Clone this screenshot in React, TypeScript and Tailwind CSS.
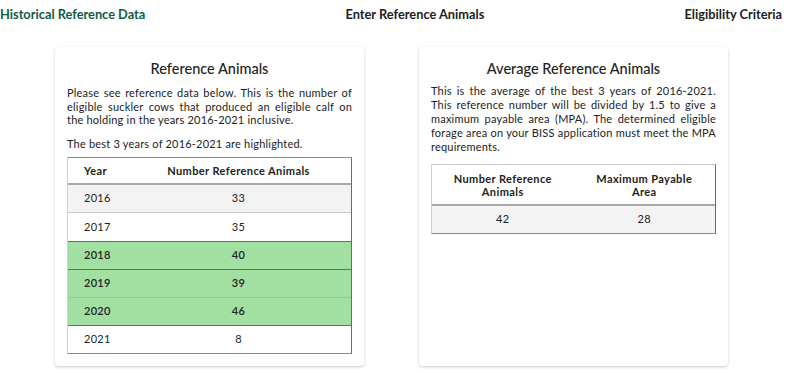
import React from "react";

const rows = [
  { year: "2016", n: "33", cls: "bg-[#f3f3f3] border-b border-[#c8c8c8]" },
  { year: "2017", n: "35", cls: "bg-white" },
  { year: "2018", n: "40", cls: "bg-[#a1e0a1] border-t border-[#6b6b6b] font-semibold" },
  { year: "2019", n: "39", cls: "bg-[#a1e0a1] border-t border-[#6b6b6b] font-semibold" },
  { year: "2020", n: "46", cls: "bg-[#a1e0a1] border-t border-[#8fcf8f] font-semibold" },
  { year: "2021", n: "8", cls: "bg-white border-t border-[#6b6b6b]" },
];

export default function App() {
  return (
    <div className="w-[800px] h-[373px] bg-white text-[#222] overflow-hidden" style={{ fontFamily: "Lato, 'Open Sans', sans-serif" }}>
      <nav className="flex justify-between w-[782px] pt-[5px] h-[47px] text-[12.8px] font-bold">
        <span className="text-[#0d5c46]">Historical Reference Data</span>
        <span>Enter Reference Animals</span>
        <span>Eligibility Criteria</span>
      </nav>
      <div className="flex gap-[55px] pl-[55px]">
        <div className="w-[309px] h-[319px] rounded-[4px] bg-white shadow-[0_1px_3px_rgba(0,0,0,0.22)] px-[12px] pt-[13px]">
          <h2 className="text-center text-[14.5px] font-medium leading-[18px] mb-[8px]">Reference Animals</h2>
          <p className="text-[11px] leading-[13.5px] text-justify tracking-[0.2px]">
            Please see reference data below. This is the number of eligible suckler cows that produced an eligible calf on the holding in the years 2016-2021 inclusive.
          </p>
          <p className="text-[11px] leading-[13.5px] tracking-[0.2px] mt-[10px] mb-[7px]">The best 3 years of 2016-2021 are highlighted.</p>
          <div className="w-[285px] border-l border-l-[#d0d0d0] border-r border-r-[#6b6b6b] border-t border-t-[#8a8a8a] border-b border-b-[#8a8a8a] text-[11px]">
            <div className="flex h-[27px] items-center border-b-2 border-[#a8a8a8] font-bold tracking-[0.4px] pt-[2px]">
              <div className="w-[58px] pl-[16px]">Year</div>
              <div className="flex-1 text-center">Number Reference Animals</div>
            </div>
            {rows.map((r) => (
              <div key={r.year} className={`flex h-[28px] items-center tracking-[0.3px] ${r.cls}`}>
                <div className="w-[58px] pl-[16px]">{r.year}</div>
                <div className="flex-1 text-center">{r.n}</div>
              </div>
            ))}
          </div>
        </div>
        <div className="w-[309px] h-[319px] rounded-[4px] bg-white shadow-[0_1px_3px_rgba(0,0,0,0.22)] px-[12px] pt-[13px]">
          <h2 className="text-center text-[14.5px] font-medium leading-[18px] mb-[6px]">Average Reference Animals</h2>
          <p className="text-[11px] leading-[14px] text-justify tracking-[0.2px]">
            This is the average of the best 3 years of 2016-2021. This reference number will be divided by 1.5 to give a maximum payable area (MPA). The determined eligible forage area on your BISS application must meet the MPA requirements.
          </p>
          <div className="mt-[10px] w-[285px] border-l border-l-[#d0d0d0] border-r border-r-[#6b6b6b] border-t border-t-[#c8c8c8] border-b border-b-[#8a8a8a] text-[11px]">
            <div className="flex h-[41px] items-center border-b-2 border-[#a8a8a8] font-bold leading-[13px] tracking-[0.4px]">
              <div className="flex-1 text-center px-[20px]">Number Reference Animals</div>
              <div className="flex-1 text-center px-[20px]">Maximum Payable Area</div>
            </div>
            <div className="flex h-[27px] items-center bg-[#f3f3f3] tracking-[0.3px]">
              <div className="flex-1 text-center">42</div>
              <div className="flex-1 text-center">28</div>
            </div>
          </div>
        </div>
      </div>
    </div>
  );
}
